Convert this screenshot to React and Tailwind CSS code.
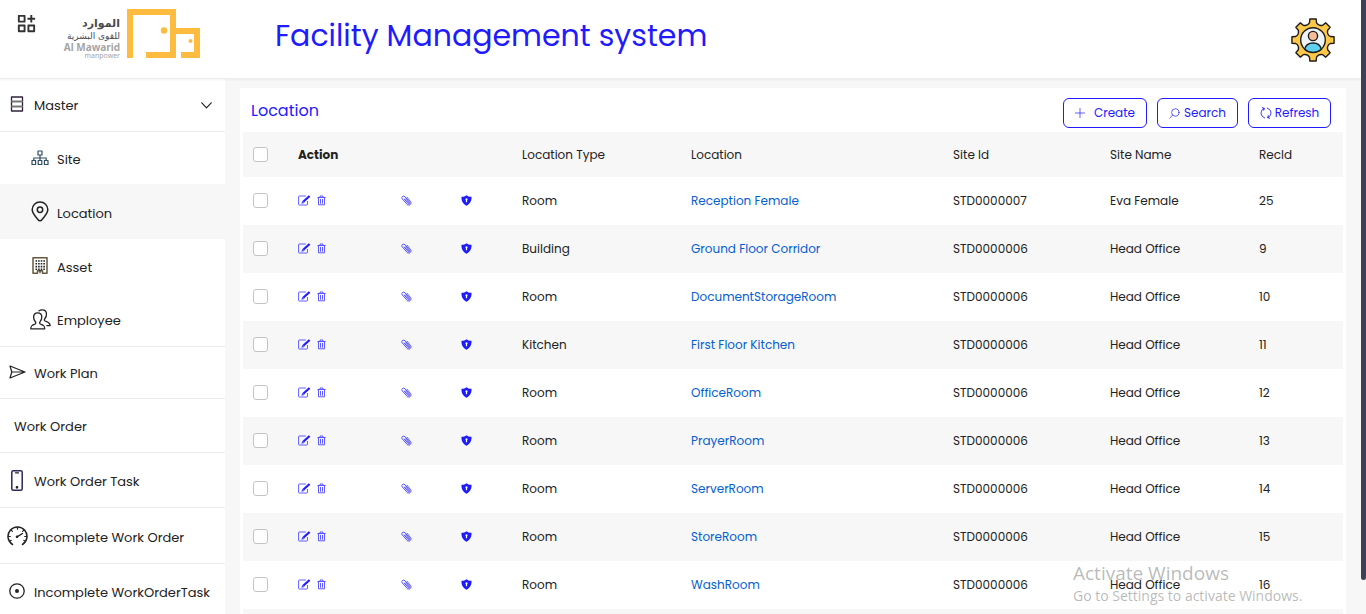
import React from "react";
import { RiFunctionAddLine } from "react-icons/ri";

const stroke = { fill: "none", stroke: "currentColor", strokeLinecap: "round", strokeLinejoin: "round" };

const RowsIcon = () => (
  <svg width="14" height="16" viewBox="0 0 14 16" {...stroke} aria-hidden="true">
    <path d="M1.500 1h11v14h-11z" strokeWidth="1.300" stroke="#33203a" />
    <path d="M2 5.500h10M2 10.500h10" strokeWidth="1.800" stroke="#777" />
  </svg>
);
const SitemapIcon = () => (
  <svg width="18" height="16" viewBox="0 0 18 16" {...stroke} stroke="#2f4d60" strokeWidth="1.200" aria-hidden="true">
    <path d="M7 1h4v4H7zM1 10.500h3.600v4H1zM7.200 10.500h3.600v4H7.200zM13.400 10.500H17v4h-3.600zM9 5v5.500M2.800 10.500V8h12.400v2.500" />
  </svg>
);
const PinIcon = () => (
  <svg width="18" height="21" viewBox="0 0 18 21" {...stroke} strokeWidth="1.500" aria-hidden="true">
    <path d="M9 1C4.600 1 1.200 4.400 1.200 8.600c0 3.600 2.600 6 5 9 .8 1 1.600 2.200 2.800 2.200s2-1.200 2.800-2.200c2.400-3 5-5.400 5-9C16.800 4.400 13.400 1 9 1z" />
    <circle cx="9" cy="8.700" r="2.700" />
  </svg>
);
const BuildingIcon = () => (
  <svg width="16" height="17" viewBox="0 0 16 17" {...stroke} aria-hidden="true">
    <path d="M1 .8h14v15.400h-4.500v-2.500h-5v2.500H1z" stroke="#66583f" strokeWidth="1.500" />
    <path d="M3.500 4h9.500M3.500 6.800h9.500M3.500 9.600h9.500M3.500 12.200h9.500" strokeWidth="1.600" strokeDasharray="1.600 1" strokeLinecap="butt" />
    <path d="M8 13.500v2.500" />
  </svg>
);
const PeopleIcon = () => (
  <svg width="21" height="21" viewBox="0 0 21 21" {...stroke} strokeWidth="1.300" aria-hidden="true">
    <path d="M.8 19.800c0-3.600 1.700-3.800 4.300-4.800.9-.4.9-1.500.2-2.300C4 11.300 3.600 9.800 3.600 8c0-2.600 1.600-4.200 4-4.200s4.200 1.600 4.200 4.200c0 1.800-.5 3.300-1.700 4.700-.7.800-.6 1.900.3 2.300 2.600 1 4.300 1.200 4.300 4.800z" />
    <path d="M9 1.800C10 1 11 .8 12.200.8c2.500 0 4.300 1.700 4.300 4.300 0 1.900-.5 3.400-1.700 4.700-.7.800-.6 1.800.3 2.200 2.500 1 5 1.400 5 4.600h-3.200" />
  </svg>
);
const SendIcon = () => (
  <svg width="17" height="14" viewBox="0 0 17 14" {...stroke} strokeWidth="1.200" aria-hidden="true">
    <path d="M1 1l15 6L1 13l1.800-6zM2.800 7H16" />
  </svg>
);
const PhoneIcon = () => (
  <svg width="12" height="21" viewBox="0 0 12 21" {...stroke} strokeWidth="1.300" aria-hidden="true">
    <rect x=".8" y=".8" width="10.400" height="19.400" rx="1.500" stroke="#2b2b5c" strokeWidth="1.500" />
    <path d="M4.500 2.800h3" />
    <circle cx="6" cy="17.300" r=".7" fill="currentColor" />
  </svg>
);
const GaugeIcon = () => (
  <svg width="21" height="20" viewBox="0 0 21 20" {...stroke} aria-hidden="true">
    <path d="M5.500 18.500A9.500 9.500 0 1 1 15.500 18.500" strokeWidth="1.500" />
    <path d="M1.500 10.500h1.800M17.700 10.500h1.800M10.500 1.500v1.700M4.200 4.200l1.200 1.200M16.800 4.200l-1.200 1.200M3 15l1.200-.6M18 15l-1.200-.6" strokeWidth="1.200" />
    <path d="M10 10.800l5.500-3.300" strokeWidth="1.400" />
    <circle cx="10" cy="10.800" r="1.300" fill="currentColor" stroke="none" />
  </svg>
);
const TargetIcon = () => (
  <svg width="16" height="16" viewBox="0 0 16 16" {...stroke} aria-hidden="true">
    <circle cx="8" cy="8" r="7.200" strokeWidth="1.300" />
    <circle cx="8" cy="8" r="2" fill="currentColor" stroke="none" />
  </svg>
);
const ChevronIcon = () => (
  <svg width="11" height="7" viewBox="0 0 11 7" {...stroke} strokeWidth="1.200" aria-hidden="true">
    <path d="M.8.8l4.700 5 4.700-5" />
  </svg>
);
const EditIcon = () => (
  <svg width="13" height="11" viewBox="0 0 13 11" {...stroke} aria-hidden="true">
    <path d="M7.500 1H1.500Q.6 1 .6 2v7q0 1 .9 1h7q1 0 1-1V6.500" strokeWidth="1" opacity=".7" />
    <path d="M5.500 6.500L11.600 1" strokeWidth="2.200" strokeLinecap="butt" />
    <path d="M4 8l.8-1.900 1.100 1.200z" strokeWidth=".6" fill="currentColor" />
  </svg>
);
const TrashIcon = () => (
  <svg width="9" height="11" viewBox="0 0 9 11" {...stroke} strokeWidth=".9" opacity=".8" aria-hidden="true">
    <path d="M.8 2.500h7.400M3 2.300V1h3v1.300M1.500 2.800v7h6v-7M3.500 4.300v4M5.500 4.300v4" />
  </svg>
);
const ClipIcon = () => (
  <svg width="11" height="11" viewBox="0 0 11 11" {...stroke} strokeWidth=".9" opacity=".85" aria-hidden="true">
    <path d="M3.200 4l4 4.600c1 1 2.400-.1 1.500-1.300L4 1.800C2.400.2-.1 2 1.200 3.800L6 9.300c1.900 2 5.200-.2 3.600-2.700L6 2.300M4.500 3.800l3.300 3.800" />
  </svg>
);
const ShieldIcon = () => (
  <svg width="11" height="11" viewBox="0 0 11 11" aria-hidden="true">
    <path d="M5.500.2c1.400 1 2.900 1.500 5 1.600.3 4-1.200 7.100-5 9-3.800-1.900-5.300-5-5-9 2.100-.1 3.600-.6 5-1.600z" fill="currentColor" />
    <path d="M5.500 3.300a1.100 1.100 0 0 1 .6 2v1.900H4.900V5.300a1.100 1.100 0 0 1 .6-2z" fill="#fff" />
  </svg>
);
const PlusIcon = () => (
  <svg width="10" height="10" viewBox="0 0 10 10" {...stroke} strokeWidth=".7" aria-hidden="true">
    <path d="M5 .5v9M.5 5h9" />
  </svg>
);
const SearchIcon = () => (
  <svg width="11" height="11" viewBox="0 0 11 11" {...stroke} strokeWidth=".7" aria-hidden="true">
    <circle cx="6.300" cy="4.500" r="3.700" />
    <path d="M3.600 7.200L.8 10" />
  </svg>
);
const RefreshIcon = () => (
  <svg width="12" height="12" viewBox="0 0 12 12" {...stroke} strokeWidth="1" aria-hidden="true">
    <path d="M4.500 10.800C1.200 9.500.2 6 2 3.300 2.600 2.400 3.300 1.800 4 1.500M2.500.8L4.300 1.400 3.800 3.200M7.500 1.200c3.300 1.300 4.300 4.800 2.500 7.500-.6.900-1.300 1.500-2 1.800M9.500 11.200l-1.800-.6.500-1.800" />
  </svg>
);

const LogoMark = () => (
  <svg width="74" height="50" viewBox="0 0 74 50" fill="#fdbb3f" aria-hidden="true">
    <path d="M0 0h49v19h24v30H54v-6h13V25H49v24H19v-6h24V6H6v43H0z" />
    <circle cx="37" cy="21.500" r="3.200" />
    <circle cx="63.500" cy="32" r="2" />
  </svg>
);

const gearPath = () => {
  const at = (a, r) => `${(22 + r * Math.sin(a)).toFixed(2)} ${(22 - r * Math.cos(a)).toFixed(2)}`;
  let d = "";
  for (let i = 0; i < 8; i++) {
    const a = (i * Math.PI) / 4;
    d += `${i ? "L" : "M"}${at(a - 0.2, 17.6)}L${at(a - 0.15, 21.3)}L${at(a + 0.15, 21.3)}L${at(a + 0.2, 17.6)}`;
    d += `Q${at(a + Math.PI / 8, 14.8)} ${at(a + Math.PI / 4 - 0.2, 17.6)}`;
  }
  return `${d}Z`;
};
const ProfileGear = () => (
  <svg width="44" height="44" viewBox="0 0 44 44" stroke="#1d1d1b" strokeWidth="1.400" strokeLinejoin="round" aria-hidden="true">
    <path d={gearPath()} fill="#fdc748" />
    <circle cx="22" cy="22" r="12.300" fill="#eff3f8" />
    <path d="M13.700 31.300C14.500 27.200 17.800 25 22 25s7.500 2.200 8.300 6.300A12.300 12.300 0 0 1 13.700 31.300z" fill="#60d0f0" />
    <circle cx="22" cy="18" r="4.600" fill="#f3bd98" />
  </svg>
);

const menu = [
  { label: "Master", icon: RowsIcon, style: "h-[52px] border-b pb-1", open: true },
  { label: "Site", icon: SitemapIcon, style: "h-[52px]", child: true },
  { label: "Location", icon: PinIcon, style: "h-[55px] bg-[#f7f7f7]", child: true },
  { label: "Asset", icon: BuildingIcon, style: "h-[53px]", child: true },
  { label: "Employee", icon: PeopleIcon, style: "h-[55px] border-b", child: true },
  { label: "Work Plan", icon: SendIcon, style: "h-[52px] border-b pb-[2px]" },
  { label: "Work Order", style: "h-[54px] border-b pb-[2px]" },
  { label: "Work Order Task", icon: PhoneIcon, style: "h-[55px] border-b" },
  { label: "Incomplete Work Order", icon: GaugeIcon, style: "h-[56px] border-b" },
  { label: "Incomplete WorkOrderTask", icon: TargetIcon, style: "h-[54px] border-b" },
];

const rows = [
  ["Room", "Reception Female", "STD0000007", "Eva Female", "25"],
  ["Building", "Ground Floor Corridor", "STD0000006", "Head Office", "9"],
  ["Room", "DocumentStorageRoom", "STD0000006", "Head Office", "10"],
  ["Kitchen", "First Floor Kitchen", "STD0000006", "Head Office", "11"],
  ["Room", "OfficeRoom", "STD0000006", "Head Office", "12"],
  ["Room", "PrayerRoom", "STD0000006", "Head Office", "13"],
  ["Room", "ServerRoom", "STD0000006", "Head Office", "14"],
  ["Room", "StoreRoom", "STD0000006", "Head Office", "15"],
  ["Room", "WashRoom", "STD0000006", "Head Office", "16"],
];

const Check = ({ label }) => (
  <input
    type="checkbox"
    aria-label={label}
    className="block size-[15px] appearance-none rounded-[3px] border border-[#c4c4c4] bg-white checked:bg-[#1f1bff]"
  />
);

function Header() {
  return (
    <header className="z-10 flex h-[79px] shrink-0 items-start border-b border-[#ececf0] bg-white shadow-xs">
      <button type="button" aria-label="Toggle menu" className="ml-[15px] mt-3 text-[#333]">
        <RiFunctionAddLine size={23} />
      </button>
      <a href="#home" className="ml-[23px] mt-[9px] flex w-[140px] justify-end gap-[7px]">
        <span className="flex flex-col items-end whitespace-nowrap pt-2">
          <span dir="rtl" className="font-['DejaVu_Sans',sans-serif] text-[11px] leading-[13px] font-bold text-[#4a4a4c]">الموارد</span>
          <span dir="rtl" className="font-['DejaVu_Sans',sans-serif] text-[9px] leading-[12px] text-[#4a4a4c]">للقوى البشرية</span>
          <span className="font-['Noto_Sans',sans-serif] text-[10px] leading-[10px] font-bold text-[#a5a5a5]">Al Mawarid</span>
          <span className="font-['Noto_Sans',sans-serif] text-[7px] leading-[7px] text-[#a5a5a5]">manpower</span>
        </span>
        <LogoMark />
      </a>
      <h1 className="ml-[74px] mt-3 text-[30px] leading-[48px] text-[#1f1bff]">Facility Management system</h1>
      <button type="button" aria-label="Profile" className="ml-auto mr-[26px] mt-[18px]">
        <ProfileGear />
      </button>
    </header>
  );
}

function Sidebar() {
  return (
    <nav aria-label="Main" className="w-[225px] shrink-0 bg-white pt-px">
      <ul>
        {menu.map(({ label, icon: Icon, style, child, open }) => (
          <li key={label} className={`border-[#ebebeb] ${style}`}>
            <a
              href={`#${label}`}
              className={`flex h-full items-center whitespace-nowrap text-[13px] leading-5 text-[#222] ${child ? "pl-[29px]" : Icon ? "pl-[6px]" : "pl-[14px]"}`}
            >
              {Icon && (
                <span className="mr-[6px] flex w-[22px] shrink-0 justify-center">
                  <Icon />
                </span>
              )}
              <span className="pt-1">{label}</span>
              {open && (
                <span className="ml-auto mr-[13px] pt-1">
                  <ChevronIcon />
                </span>
              )}
            </a>
          </li>
        ))}
      </ul>
    </nav>
  );
}

const toolButton = "flex h-[30px] items-center justify-center rounded-md border border-[#1f1bff] text-xs text-[#1f1bff]";

function LocationTable() {
  return (
    <table className="w-full table-fixed text-left text-xs text-[#222]">
      <colgroup>
        <col className="w-[45px]" />
        <col className="w-[103px]" />
        <col className="w-[60px]" />
        <col className="w-[61px]" />
        <col className="w-[169px]" />
        <col className="w-[262px]" />
        <col className="w-[157px]" />
        <col className="w-[149px]" />
        <col className="w-[94px]" />
      </colgroup>
      <thead>
        <tr className="h-[45px] bg-[#f7f7f7]">
          <th className="px-[10px]"><Check label="Select all" /></th>
          <th colSpan={3} className="px-[10px] font-bold">Action</th>
          {["Location Type", "Location", "Site Id", "Site Name", "RecId"].map((name) => (
            <th key={name} className="px-[10px] font-normal">{name}</th>
          ))}
        </tr>
      </thead>
      <tbody>
        {rows.map(([type, location, siteId, siteName, recId]) => (
          <tr key={recId} className="h-[48px] even:bg-[#f7f7f7]">
            <td className="px-[10px] pb-[2px]"><Check label={`Select ${location}`} /></td>
            <td className="px-[10px] pb-[2px] text-[#1f1bff]">
              <div className="flex items-center gap-[6px]">
                <button type="button" aria-label={`Edit ${location}`}><EditIcon /></button>
                <button type="button" aria-label={`Delete ${location}`}><TrashIcon /></button>
              </div>
            </td>
            <td className="px-[10px] pb-[2px] text-[#1f1bff]">
              <button type="button" aria-label={`Attachments of ${location}`} className="block"><ClipIcon /></button>
            </td>
            <td className="px-[10px] pb-[2px] text-[#1f1bff]">
              <button type="button" aria-label={`Permissions of ${location}`} className="block"><ShieldIcon /></button>
            </td>
            <td className="px-[10px]">{type}</td>
            <td className="px-[10px]"><a href={`#${location}`} className="text-[#0560d0]">{location}</a></td>
            <td className="px-[10px]">{siteId}</td>
            <td className="px-[10px]">{siteName}</td>
            <td className="px-[10px]">{recId}</td>
          </tr>
        ))}
        <tr className="h-[48px] bg-[#f7f7f7]"><td colSpan={9} /></tr>
      </tbody>
    </table>
  );
}

export default function App() {
  return (
    <div className="relative flex h-screen overflow-hidden bg-[#f7f7f7] font-['Poppins','Inter',sans-serif]">
      <div className="flex min-w-0 flex-1 flex-col">
        <Header />
        <div className="flex min-h-0 flex-1">
          <Sidebar />
          <main className="min-w-0 flex-1 overflow-hidden pl-[15px] pr-[15px] pt-[9px]">
            <section className="bg-white px-[3px]">
              <div className="flex h-[44px] items-start justify-between pl-2 pr-3 pt-[10px]">
                <h2 className="text-base leading-[26px] text-[#1f1bff]">Location</h2>
                <div className="flex gap-[10px]">
                  <button type="button" className={`${toolButton} w-[84px] gap-[9px]`}><PlusIcon />Create</button>
                  <button type="button" className={`${toolButton} w-[81px] gap-1`}><SearchIcon />Search</button>
                  <button type="button" className={`${toolButton} w-[83px] gap-[3px]`}><RefreshIcon />Refresh</button>
                </div>
              </div>
              <LocationTable />
            </section>
          </main>
        </div>
      </div>
      <div className="w-[5px] shrink-0">
        <div className="h-[94.5%] rounded-b-sm bg-[#3d4156]" />
      </div>
      <div className="pointer-events-none absolute right-[57px] bottom-2 z-20 w-[236px] font-['Open_Sans',sans-serif] text-[#8c8c8c]/60">
        <p className="text-[19px] leading-[26px]">Activate Windows</p>
        <p className="whitespace-nowrap text-[14px] leading-[20px]">Go to Settings to activate Windows.</p>
      </div>
    </div>
  );
}
